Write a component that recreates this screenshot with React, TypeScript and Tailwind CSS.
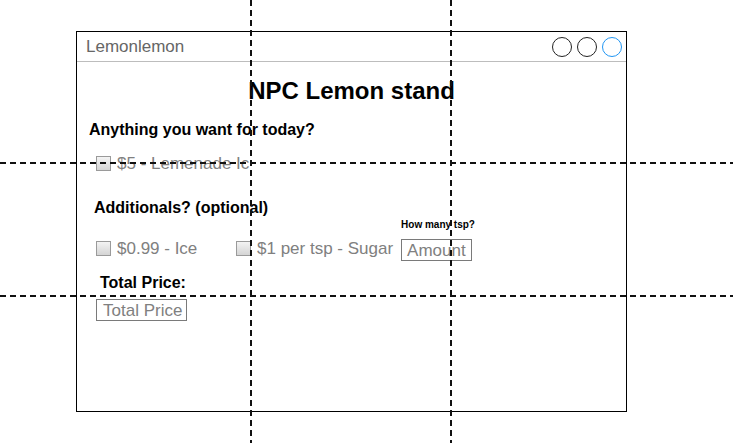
import React from 'react'

const font = { fontFamily: '"Liberation Sans", Arial, sans-serif' }

function Box({ className = '' }: { className?: string }) {
  return (
    <span
      className={`inline-block w-[15px] h-[15px] border border-[#9a9a9a] bg-gradient-to-b from-[#f4f4f4] to-[#d4d4d4] ${className}`}
    />
  )
}

function Check({ label, className = '' }: { label: string; className?: string }) {
  return (
    <div className={`flex items-center gap-[6px] ${className}`}>
      <Box />
      <span className="text-[17px] leading-none text-[#808080] whitespace-nowrap">{label}</span>
    </div>
  )
}

function Guides() {
  return (
    <svg className="pointer-events-none fixed inset-0 z-10" width="733" height="443">
      <g stroke="#111" strokeWidth="2" strokeDasharray="6 4">
        <line x1="251" y1="0" x2="251" y2="443" />
        <line x1="451" y1="0" x2="451" y2="443" />
        <line x1="0" y1="163" x2="733" y2="163" />
        <line x1="0" y1="296" x2="733" y2="296" />
      </g>
    </svg>
  )
}

export default function App() {
  return (
    <div className="w-[733px] h-[443px] bg-white overflow-hidden pt-[31px] pl-[76px]" style={font}>
      <div className="w-[551px] h-[381px] border border-black flex flex-col">
        {/* title bar */}
        <div className="h-[30px] border-b border-[#bdbdbd] flex items-center justify-between pl-[9px] pr-[4px]">
          <span className="text-[17px] text-[#666] leading-none">Lemonlemon</span>
          <div className="flex gap-[5px]">
            <span className="w-[20px] h-[20px] rounded-full border border-[#222]" />
            <span className="w-[20px] h-[20px] rounded-full border border-[#222]" />
            <span className="w-[20px] h-[20px] rounded-full border border-[#2196f3]" />
          </div>
        </div>

        {/* content */}
        <div className="flex flex-col">
          <h1 className="mt-[17px] text-center text-[24px] font-bold leading-none text-black">NPC Lemon stand</h1>

          <p className="mt-[19px] ml-[12px] text-[16px] font-bold leading-none text-black">Anything you want for today?</p>
          <Check className="mt-[17px] ml-[19px]" label="$5 - Lemenade Ic" />

          <p className="mt-[28px] ml-[17px] text-[16px] font-bold leading-none text-black">Additionals? (optional)</p>

          <div className="flex items-end ml-[19px] mt-[4px]">
            <Check label="$0.99 - Ice" className="w-[140px] mb-[4px]" />
            <Check label="$1 per tsp - Sugar" className="mb-[4px]" />
            <div className="flex flex-col ml-[8px]">
              <span className="text-[10px] font-bold leading-none text-black mb-[9px]">How many tsp?</span>
              <div className="w-[71px] h-[22px] border border-[#7a7a7a] flex items-center px-[5px]">
                <span className="text-[17px] leading-none text-[#808080]">Amount</span>
              </div>
            </div>
          </div>

          <p className="mt-[14px] ml-[23px] text-[16px] font-bold leading-none text-black">Total Price:</p>
          <div className="mt-[8px] ml-[19px] w-[91px] h-[22px] border border-[#7a7a7a] flex items-center px-[6px]">
            <span className="text-[17px] leading-none text-[#808080] whitespace-nowrap">Total Price</span>
          </div>
        </div>
      </div>
      <Guides />
    </div>
  )
}
